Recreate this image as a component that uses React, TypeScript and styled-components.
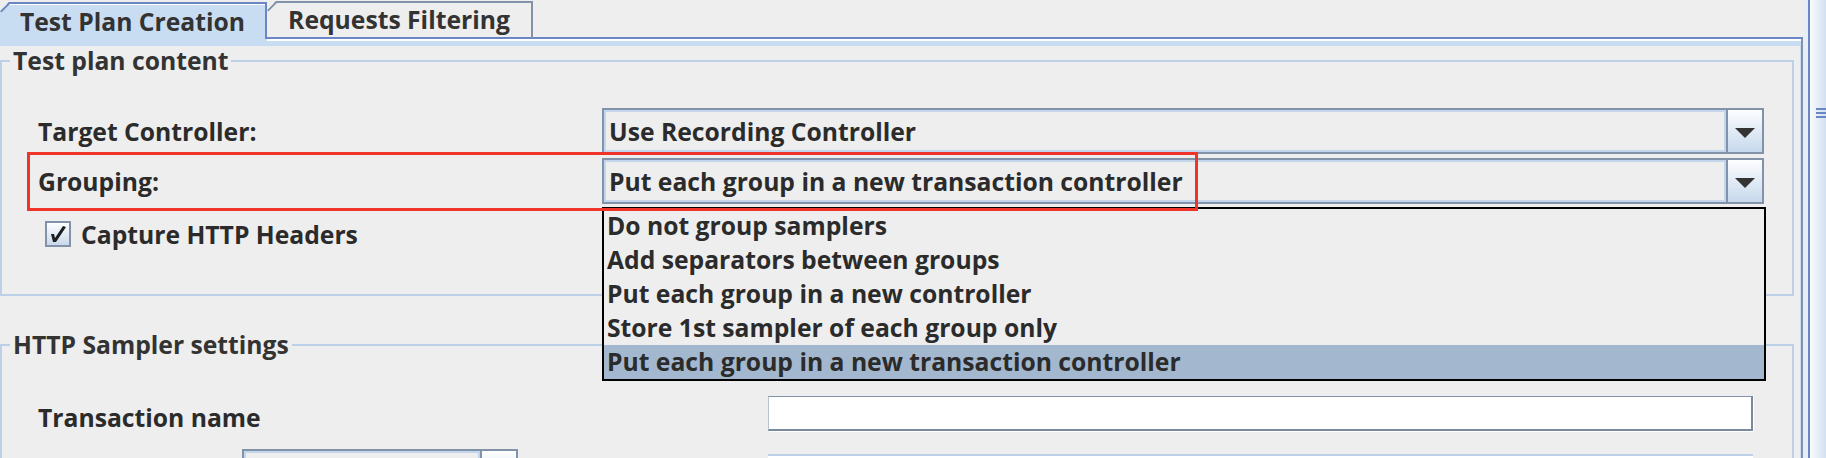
import React from "react";
import styled, { createGlobalStyle } from "styled-components";

const GROUPING_OPTIONS = [
  "Do not group samplers",
  "Add separators between groups",
  "Put each group in a new controller",
  "Store 1st sampler of each group only",
  "Put each group in a new transaction controller",
];

const GlobalStyle = createGlobalStyle`
  html, body {
    margin: 0;
    padding: 0;
    background: #eeeeee;
  }
  body {
    font-family: "Open Sans", "DejaVu Sans", sans-serif;
    font-weight: 700;
    font-size: 24.7px;
    color: #2b2b2b;
    overflow: hidden;
  }
`;

const Window = styled.div`
  display: flex;
  width: 1826px;
  height: 458px;
  overflow: hidden;
`;

const Main = styled.div`
  width: 1803px;
  display: flex;
  flex-direction: column;
`;

const ScrollStrip = styled.div`
  flex: 1;
  border-left: 5px solid #e8eef6;
  background: linear-gradient(to right, #6a86c4 0 2px, #f9fbfe 2px, #d3e1f1 100%);
  padding: 108px 0 0 8px;
`;

const Grip = styled.div`
  width: 10px;
  height: 10px;
  background: repeating-linear-gradient(to bottom, #6a86c4 0 2px, transparent 2px 4px);
`;

const TabRow = styled.div`
  display: flex;
  align-items: flex-end;
  height: 39px;
`;

const Tab = styled.div<{ $active?: boolean }>`
  position: relative;
  box-sizing: border-box;
  display: flex;
  align-items: center;
  justify-content: center;
  width: ${({ $active }) => ($active ? "267px" : "266px")};
  height: ${({ $active }) => ($active ? "37px" : "38px")};
  padding-bottom: ${({ $active }) => ($active ? "0" : "2px")};
  background: ${({ $active }) => ($active ? "#c9ddf2" : "#eeeeee")};
  border-top: 2px solid ${({ $active }) => ($active ? "#6a86c4" : "#8293a9")};
  border-right: 2px solid ${({ $active }) => ($active ? "#6a86c4" : "#8293a9")};
  border-bottom: ${({ $active }) => ($active ? "none" : "2px solid #6a86c4")};
  box-shadow: ${({ $active }) => ($active ? "inset 0 1px 0 #ffffff" : "none")};
  clip-path: polygon(9px 0, 100% 0, 100% 100%, 0 100%, 0 9px);
  color: #333333;
  white-space: nowrap;

  &::before {
    content: "";
    position: absolute;
    left: 0;
    top: 7px;
    width: 13px;
    height: 2px;
    background: ${({ $active }) => ($active ? "#6a86c4" : "#8293a9")};
    transform-origin: 0 0;
    transform: rotate(-45deg);
  }
`;

const TabFiller = styled.div`
  flex: 1;
  height: 37px;
  border-bottom: 2px solid #6a86c4;
`;

const Body = styled.div`
  flex: 1;
  border-right: 2px solid #8293a9;
  box-shadow: inset -1px 0 0 #c9ddf2;
`;

const Band = styled.div`
  height: 7px;
  background: linear-gradient(#ffffff, #ffffff) 267px 0 / 100% 2px no-repeat, #c9ddf2;
`;

const Content = styled.div`
  padding: 2px 7px 0 0;
`;

const Group = styled.fieldset<{ $gap?: number }>`
  margin: ${({ $gap }) => $gap ?? 0}px 0 0;
  padding: 0;
  min-width: 0;
  border: 2px solid #bcd0e7;
`;

const Legend = styled.legend`
  margin-left: 8px;
  padding: 0 3px;
  line-height: 26px;
  color: #333333;
`;

const GroupInner = styled.div<{ $pad: string }>`
  padding: ${({ $pad }) => $pad};
`;

const Rows = styled.div`
  display: flex;
  flex-direction: column;
  gap: 4px;
`;

const Row = styled.div`
  position: relative;
  display: flex;
  align-items: center;
  height: 46px;
`;

const Label = styled.div`
  width: 564px;
  flex: none;
  white-space: nowrap;
`;

const Highlight = styled.div`
  position: absolute;
  top: -6px;
  left: -11px;
  width: 1171px;
  height: 59px;
  box-sizing: border-box;
  border: 3px solid #f0342a;
  z-index: 3;
  pointer-events: none;
`;

const Combo = styled.div<{ $width?: number }>`
  position: relative;
  box-sizing: border-box;
  display: flex;
  flex: ${({ $width }) => ($width ? "none" : "1")};
  width: ${({ $width }) => ($width ? `${$width}px` : "auto")};
  height: 46px;
  border: 2px solid #8293a9;
`;

const ComboValue = styled.div`
  flex: 1;
  display: flex;
  align-items: center;
  padding-left: 5px;
  box-shadow: inset 0 0 0 2px #c3d6eb;
  white-space: nowrap;
  overflow: hidden;
`;

const ComboButton = styled.div`
  box-sizing: border-box;
  width: 36px;
  flex: none;
  display: flex;
  align-items: center;
  justify-content: center;
  border-left: 2px solid #8293a9;
  background: linear-gradient(#fdfeff, #c6d8ec);
`;

const Arrow = styled.span`
  margin-top: 4px;
  width: 0;
  height: 0;
  border-left: 10px solid transparent;
  border-right: 10px solid transparent;
  border-top: 10px solid #333333;
`;

const Popup = styled.ul`
  position: absolute;
  top: 47px;
  left: -2px;
  right: -4px;
  margin: 0;
  padding: 0;
  list-style: none;
  border: 2px solid #000000;
  background: #eeeeee;
  z-index: 2;
`;

const Option = styled.li<{ $selected?: boolean }>`
  height: 34px;
  line-height: 34px;
  padding-left: 3px;
  white-space: nowrap;
  background: ${({ $selected }) => ($selected ? "#a3b8cf" : "transparent")};
`;

const CheckRow = styled.div`
  display: flex;
  align-items: center;
  gap: 10px;
  height: 26px;
  margin-top: 17px;
  padding-left: 7px;
`;

const CheckBox = styled.div`
  box-sizing: border-box;
  width: 26px;
  height: 26px;
  border: 2px solid #8293a9;
  background: linear-gradient(#fdfeff, #c9d9eb);
  display: flex;
`;

const FormGrid = styled.div`
  display: grid;
  grid-template-columns: 730px 1fr;
  row-gap: 14px;
  align-items: start;
`;

const FieldLabel = styled.div`
  height: 35px;
  line-height: 35px;
  padding-top: 4px;
  white-space: nowrap;
`;

const TextField = styled.div<{ $open?: boolean }>`
  box-sizing: border-box;
  height: ${({ $open }) => ($open ? "40px" : "35px")};
  margin-top: ${({ $open }) => ($open ? "5px" : "0")};
  background: #ffffff;
  border-style: solid;
  border-width: ${({ $open }) => ($open ? "2px 0 0 0" : "1px 2px 2px 1px")};
  border-color: ${({ $open }) =>
    $open ? "#bcd0e7" : "#8293a9 #7a8a9c #7a8a9c #b8c3cf"};
  box-shadow: ${({ $open }) => ($open ? "none" : "1px 1px 0 #ffffff")};
`;

const ComboCell = styled.div`
  padding-left: 204px;
`;

function CheckMark() {
  return (
    <svg width="22" height="22" viewBox="0 0 22 22">
      <polygon points="4,11 7,11 8,15 16,3 19,4 9,19 6,19" fill="#1e1e1e" />
    </svg>
  );
}

export default function App() {
  return (
    <>
      <GlobalStyle />
      <Window>
        <Main>
          <TabRow>
            <Tab $active>Test Plan Creation</Tab>
            <Tab>Requests Filtering</Tab>
            <TabFiller />
          </TabRow>
          <Body>
            <Band />
            <Content>
              <Group>
                <Legend>Test plan content</Legend>
                <GroupInner $pad="34px 28px 47px 36px">
                  <Rows>
                    <Row>
                      <Label>Target Controller:</Label>
                      <Combo>
                        <ComboValue>Use Recording Controller</ComboValue>
                        <ComboButton>
                          <Arrow />
                        </ComboButton>
                      </Combo>
                    </Row>
                    <Row>
                      <Highlight />
                      <Label>Grouping:</Label>
                      <Combo>
                        <ComboValue>{GROUPING_OPTIONS[4]}</ComboValue>
                        <ComboButton>
                          <Arrow />
                        </ComboButton>
                        <Popup>
                          {GROUPING_OPTIONS.map((opt, idx) => (
                            <Option key={opt} $selected={idx === 4}>
                              {opt}
                            </Option>
                          ))}
                        </Popup>
                      </Combo>
                    </Row>
                  </Rows>
                  <CheckRow>
                    <CheckBox>
                      <CheckMark />
                    </CheckBox>
                    <span>Capture HTTP Headers</span>
                  </CheckRow>
                </GroupInner>
              </Group>
              <Group $gap={36}>
                <Legend>HTTP Sampler settings</Legend>
                <GroupInner $pad="38px 39px 0 36px">
                  <FormGrid>
                    <FieldLabel>Transaction name</FieldLabel>
                    <TextField />
                    <ComboCell>
                      <Combo $width={276}>
                        <ComboValue />
                        <ComboButton />
                      </Combo>
                    </ComboCell>
                    <TextField $open />
                  </FormGrid>
                </GroupInner>
              </Group>
            </Content>
          </Body>
        </Main>
        <ScrollStrip>
          <Grip />
        </ScrollStrip>
      </Window>
    </>
  );
}
